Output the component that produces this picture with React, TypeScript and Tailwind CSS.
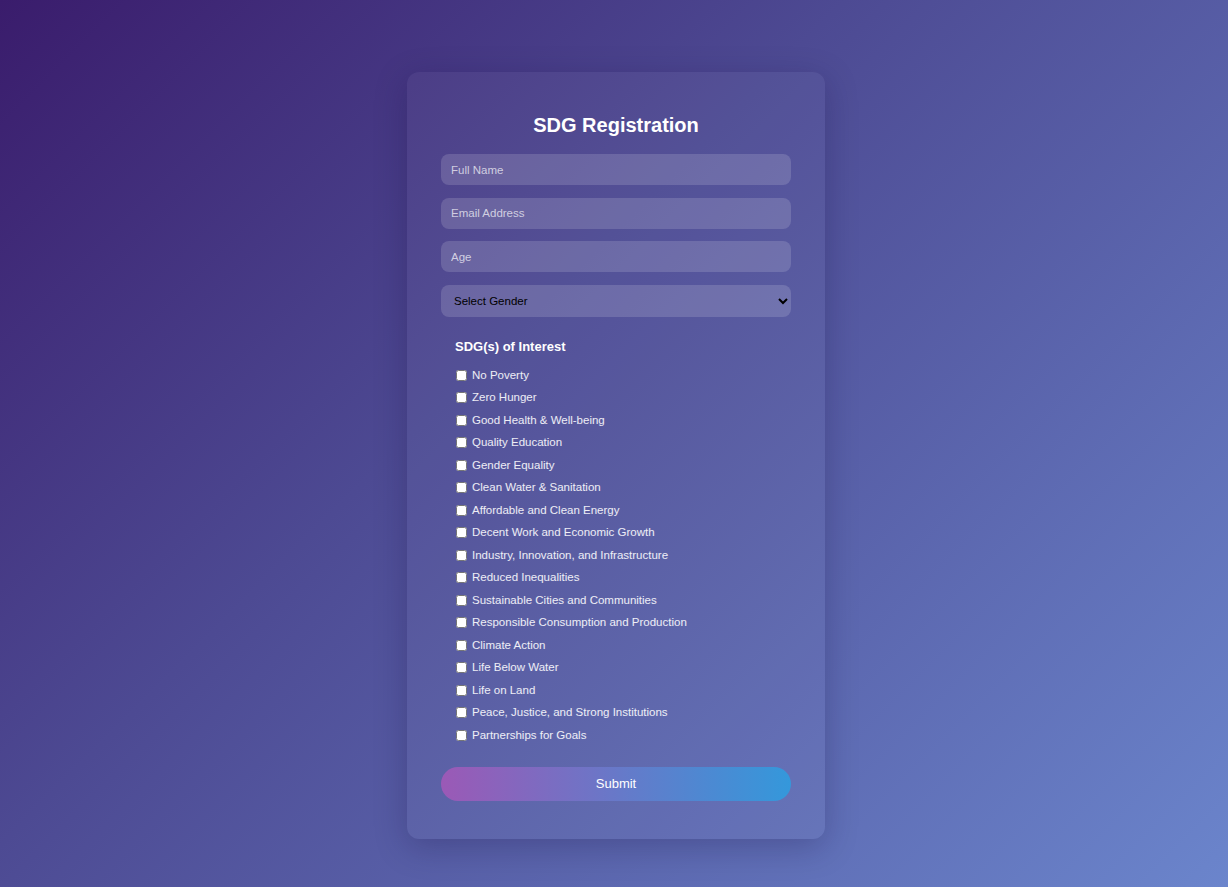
import { FC } from "react"

const sdgs = [
	"No Poverty",
	"Zero Hunger",
	"Good Health & Well-being",
	"Quality Education",
	"Gender Equality",
	"Clean Water & Sanitation",
	"Affordable and Clean Energy",
	"Decent Work and Economic Growth",
	"Industry, Innovation, and Infrastructure",
	"Reduced Inequalities",
	"Sustainable Cities and Communities",
	"Responsible Consumption and Production",
	"Climate Action",
	"Life Below Water",
	"Life on Land",
	"Peace, Justice, and Strong Institutions",
	"Partnerships for Goals",
]

const inputClass =
	"w-full h-[31px] px-[10px] rounded-lg bg-white/15 text-white text-[11.5px] placeholder:text-white/70 outline-none"

const App: FC = () => {
	return (
		<div className="min-h-screen w-full flex justify-center items-start pt-[72px] pl-[4px] bg-[linear-gradient(135deg,#3a1c6c_0%,#4d4a93_40%,#6b85cc_100%)] font-['Liberation_Sans',Arial,sans-serif]">
			<form
				onSubmit={e => e.preventDefault()}
				className="w-[418px] rounded-xl bg-white/[0.04] shadow-[0_8px_32px_rgba(20,10,60,0.25)] px-[34px] pt-[42px] pb-[38px]"
			>
				<h2 className="text-[20px] leading-[23px] font-bold text-white text-center mb-[17px]">
					SDG Registration
				</h2>

				<div className="flex flex-col gap-[12.5px]">
					<input type="text" placeholder="Full Name" className={inputClass} />
					<input type="email" placeholder="Email Address" className={inputClass} />
					<input type="number" placeholder="Age" className={inputClass} />
					<select
						defaultValue=""
						className="w-full h-[32px] pl-[9px] pr-[6px] rounded-lg bg-white/15 text-black text-[11.5px] outline-none"
					>
						<option value="" disabled>
							Select Gender
						</option>
						<option value="male">Male</option>
						<option value="female">Female</option>
						<option value="other">Other</option>
					</select>
				</div>

				<div className="mt-[22.5px] pl-[14px]">
					<p className="text-[13px] leading-[15px] font-bold text-white mb-[10px]">
						SDG(s) of Interest
					</p>
					<div className="flex flex-col">
						{sdgs.map(goal => (
							<label
								key={goal}
								className="h-[22.5px] flex items-center text-[11.5px] text-white/90"
							>
								<input
									type="checkbox"
									className="w-[11px] h-[11px] m-0 ml-px mr-[5px]"
								/>
								{goal}
							</label>
						))}
					</div>
				</div>

				<button
					type="submit"
					className="mt-[20.5px] w-full h-[34px] rounded-full bg-[linear-gradient(90deg,#9b59b6,#3498db)] text-white text-[13px]"
				>
					Submit
				</button>
			</form>
		</div>
	)
}

export default App
